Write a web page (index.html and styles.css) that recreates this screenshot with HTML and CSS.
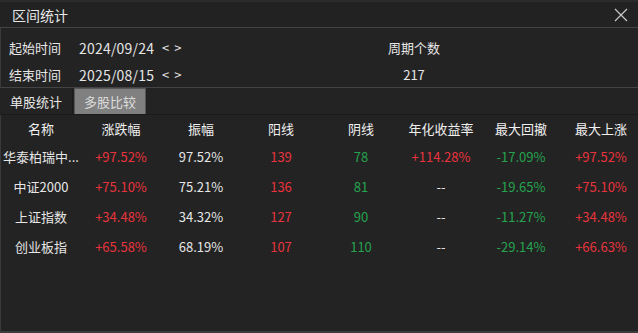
FILE: index.html
```html
<!DOCTYPE html>
<html lang="zh-CN">
<head>
<meta charset="UTF-8">
<title>区间统计</title>
<link rel="stylesheet" href="styles.css">
</head>
<body>
<div class="window">
  <div class="titlebar">
    <span class="title">区间统计</span>
    <svg class="close" width="14" height="14" viewBox="0 0 14 14">
      <path d="M1 1 L13 13 M13 1 L1 13" stroke="#c8c8c8" stroke-width="1.2" fill="none"/>
    </svg>
  </div>

  <div class="info">
    <div class="info-row">
      <span class="label">起始时间</span>
      <span class="date">2024/09/24</span>
      <span class="arrows">&lt; &gt;</span>
      <span class="stat">周期个数</span>
    </div>
    <div class="info-row">
      <span class="label">结束时间</span>
      <span class="date">2025/08/15</span>
      <span class="arrows">&lt; &gt;</span>
      <span class="stat">217</span>
    </div>
  </div>

  <div class="tabs">
    <span class="tab">单股统计</span>
    <span class="tab active">多股比较</span>
  </div>

  <div class="grid-wrap">
    <table class="grid">
      <thead>
        <tr>
          <th>名称</th><th>涨跌幅</th><th>振幅</th><th>阳线</th>
          <th>阴线</th><th>年化收益率</th><th>最大回撤</th><th>最大上涨</th>
        </tr>
      </thead>
      <tbody>
        <tr>
          <td>华泰柏瑞中...</td><td class="up">+97.52%</td><td>97.52%</td><td class="up">139</td>
          <td class="down">78</td><td class="up">+114.28%</td><td class="down">-17.09%</td><td class="up">+97.52%</td>
        </tr>
        <tr>
          <td>中证2000</td><td class="up">+75.10%</td><td>75.21%</td><td class="up">136</td>
          <td class="down">81</td><td>--</td><td class="down">-19.65%</td><td class="up">+75.10%</td>
        </tr>
        <tr>
          <td>上证指数</td><td class="up">+34.48%</td><td>34.32%</td><td class="up">127</td>
          <td class="down">90</td><td>--</td><td class="down">-11.27%</td><td class="up">+34.48%</td>
        </tr>
        <tr>
          <td>创业板指</td><td class="up">+65.58%</td><td>68.19%</td><td class="up">107</td>
          <td class="down">110</td><td>--</td><td class="down">-29.14%</td><td class="up">+66.63%</td>
        </tr>
      </tbody>
    </table>
  </div>
</div>
</body>
</html>
```

FILE: styles.css
```css
html, body {
  margin: 0;
  padding: 0;
  background-color: #232323;
}
body {
  font-family: "Noto Sans CJK SC", "Noto Sans", sans-serif;
  font-size: 13px;
  color: #e6e6e6;
}
.window {
  width: 638px;
  height: 333px;
  display: flex;
  flex-direction: column;
  overflow: hidden;
  border-top: 2px solid #2b2b2e;
  box-sizing: border-box;
}
.titlebar {
  height: 25px;
  display: flex;
  align-items: center;
  justify-content: space-between;
  padding: 0 10px 0 12px;
  border-bottom: 1px solid #444;
  background-color: #222;
}
.title {
  font-size: 14px;
  color: #e8e8e8;
}
.info {
  border-left: 1px solid #3a3a3a;
  padding: 6px 0 0 8px;
  height: 53px;
  border-bottom: 1px solid #444;
}
.info-row {
  display: flex;
  align-items: center;
  height: 27px;
}
.label {
  width: 70px;
}
.date {
  width: 83px;
  font-size: 14px;
  letter-spacing: 0.2px;
}
.arrows {
  width: 218px;
  letter-spacing: 1px;
}
.stat {
  width: 68px;
  text-align: center;
}
.tabs {
  display: flex;
  height: 26px;
  border-bottom: 1px solid #1a1a1a;
}
.tab {
  width: 72px;
  display: flex;
  align-items: center;
  justify-content: center;
  border-right: 1px solid #1a1a1a;
  color: #e6e6e6;
}
.tab.active {
  margin-left: 1px;
  width: 70px;
  background-color: #808080;
  color: #dcdcdc;
  border: 1px solid #555;
  border-bottom: none;
}
.grid-wrap {
  flex: 1;
  border-left: 1px solid #3a3a3a;
  border-bottom: 2px solid #3c3c3c;
}
.grid {
  table-layout: fixed;
  width: 640px;
  border-collapse: collapse;
}
.grid th {
  height: 26px;
  font-weight: normal;
  color: #f0f0f0;
  padding: 0;
  width: 80px;
}
.grid td {
  height: 30px;
  padding: 0;
  text-align: center;
  white-space: nowrap;
  overflow: hidden;
}
.grid .up {
  color: #e8333d;
}
.grid .down {
  color: #25a34f;
}
```
